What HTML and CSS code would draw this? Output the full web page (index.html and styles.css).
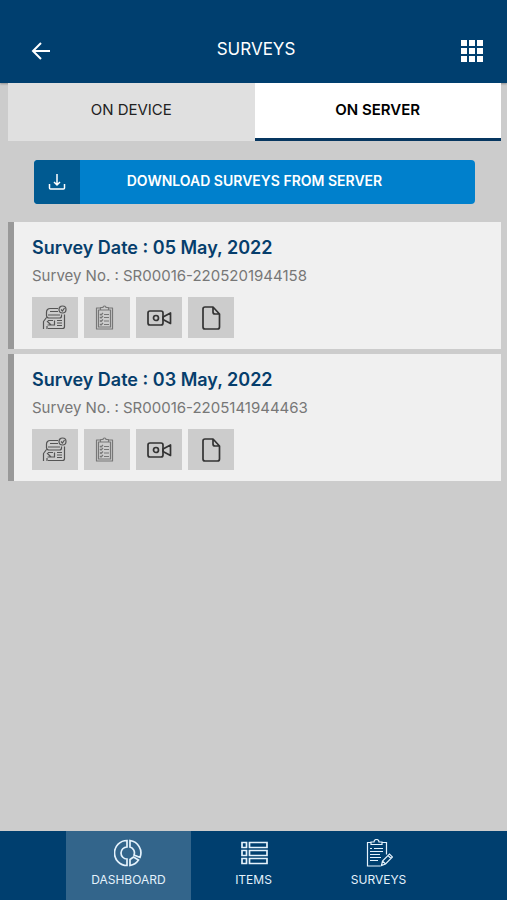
FILE: index.html
```html
<!DOCTYPE html>
<html lang="en">
<head>
    <meta charset="UTF-8">
    <meta name="viewport" content="width=device-width, initial-scale=1.0">
    <title>Surveys</title>
    <link rel="stylesheet" href="styles.css">
</head>
<body>
    <!-- Icons shared by the survey cards -->
    <svg class="sprite" aria-hidden="true">
        <symbol id="icon-form" viewBox="0 0 26 26">
            <path d="M16 3.500H8A3.500 3.500 0 0 0 4.500 7v4M16 6.500H8M4.500 10.500A2.500 2.500 0 0 0 7 13h10.500a2 2 0 0 0 2-2V9.500M6 10h12M22.500 9.500v12a2 2 0 0 1-2 2H6M1.500 24v-7.500l3-4M5 16l4 4H5.500M12.500 15.500V20H9M6 15.500h5M15 15.500h5M15 18h5M15 20.500h5M5 21v3"/>
            <circle cx="20.500" cy="4.500" r="3.500"/>
            <path d="M19 4.500l1.500 1.500 2-3"/>
        </symbol>
        <symbol id="icon-checklist" viewBox="0 0 26 26">
            <path d="M7 3H2.500v21h16V3H14M4.500 5h12v17h-12zM6.500 5V2.500h2.500a1.500 1.500 0 0 1 3 0h2.500V5zM6 9l1 1 2-2M6 12l1 1 2-2M6 15.500l1 1 2-2M6 19l1 1 2-2M10 9.500h5M10 12.500h5M10 16h5M10 19.500h5"/>
        </symbol>
        <symbol id="icon-video" viewBox="0 0 26 26">
            <rect x="2" y="6" width="15" height="14" rx="2"/>
            <circle cx="10" cy="13" r="2.500"/>
            <path d="M17 12l7.500-4v10.500L17 14.500z"/>
        </symbol>
        <symbol id="icon-file" viewBox="0 0 26 26">
            <path d="M7 2h8l6.500 7v13a2 2 0 0 1-2 2H7a2 2 0 0 1-2-2V4a2 2 0 0 1 2-2zM15 2v5a2 2 0 0 0 2 2h4.500"/>
        </symbol>
    </svg>

    <header class="topbar">
        <button class="icon-button" type="button" aria-label="Back">
            <svg class="back-icon" viewBox="0 0 20 20"><path d="M19 10H2M10 2l-8 8 8 8"/></svg>
        </button>
        <h1>SURVEYS</h1>
        <button class="icon-button" type="button" aria-label="Menu">
            <svg class="menu-icon" viewBox="0 0 22 22">
                <path d="M0 0h6v6H0zM8 0h6v6H8zM16 0h6v6h-6zM0 8h6v6H0zM8 8h6v6H8zM16 8h6v6h-6zM0 16h6v6H0zM8 16h6v6H8zM16 16h6v6h-6z"/>
            </svg>
        </button>
    </header>

    <main>
        <div class="tabs">
            <button class="tab" type="button">ON DEVICE</button>
            <button class="tab active" type="button">ON SERVER</button>
        </div>

        <button class="download" type="button">
            <span class="download-icon">
                <svg viewBox="0 0 18 18"><path d="M9 1v11M6 9l3 3 3-3M1.500 11v4a1 1 0 0 0 1 1h13a1 1 0 0 0 1-1v-4"/></svg>
            </span>
            <span class="download-text">DOWNLOAD SURVEYS FROM SERVER</span>
        </button>

        <section class="surveys">
            <article class="card">
                <h2>Survey Date : 05 May, 2022</h2>
                <p>Survey No. : SR00016-2205201944158</p>
                <div class="actions">
                    <button class="action" type="button" aria-label="Form"><svg class="thin"><use href="#icon-form"/></svg></button>
                    <button class="action" type="button" aria-label="Checklist"><svg class="thin light"><use href="#icon-checklist"/></svg></button>
                    <button class="action" type="button" aria-label="Video"><svg><use href="#icon-video"/></svg></button>
                    <button class="action" type="button" aria-label="File"><svg><use href="#icon-file"/></svg></button>
                </div>
            </article>

            <article class="card">
                <h2>Survey Date : 03 May, 2022</h2>
                <p>Survey No. : SR00016-2205141944463</p>
                <div class="actions">
                    <button class="action" type="button" aria-label="Form"><svg class="thin"><use href="#icon-form"/></svg></button>
                    <button class="action" type="button" aria-label="Checklist"><svg class="thin light"><use href="#icon-checklist"/></svg></button>
                    <button class="action" type="button" aria-label="Video"><svg><use href="#icon-video"/></svg></button>
                    <button class="action" type="button" aria-label="File"><svg><use href="#icon-file"/></svg></button>
                </div>
            </article>
        </section>
    </main>

    <nav class="bottom-nav">
        <a class="nav-item active" href="#">
            <svg class="medium" viewBox="0 0 28 28">
                <path d="M13 1.500a12.500 12.500 0 0 0 0 25v-6.500a6 6 0 0 1 0-12zM16 1.500V8a6 6 0 0 1 4 8l6 2.500A12.500 12.500 0 0 0 16 1.500zM16 20.500l3.500-2.500 5 3a13 13 0 0 1-8.500 5.500z"/>
            </svg>
            DASHBOARD
        </a>
        <a class="nav-item" href="#">
            <svg class="medium" viewBox="0 0 28 28">
                <path d="M2 3.500h4.500v5H2zM9.500 3.500h17.500v5H9.500zM2 11.500h4.500v5H2zM9.500 11.500h17.500v5H9.500zM2 19.500h4.500v5H2zM9.500 19.500h17.500v5H9.500z"/>
            </svg>
            ITEMS
        </a>
        <a class="nav-item" href="#">
            <svg viewBox="0 0 28 28">
                <path d="M6 3.500H2.500v23.500h13M17 3.500h4.500v12M6 5.500V3h3a2.500 2.500 0 0 1 5 0h3v2.500zM5 9.500h2M9 9.500h9M5 12.500h13M5 15.500h10M5 18.500h11M5 21.500h8M16.500 26.500l1-4.500 7-7 3 3-7 7zM23 16.500l3 3M17.500 22l3 3"/>
            </svg>
            SURVEYS
        </a>
    </nav>
</body>
</html>
```
FILE: styles.css
```css
* {
    margin: 0;
    padding: 0;
    box-sizing: border-box;
}

body {
    font-family: Inter, "Open Sans", sans-serif;
    background-color: #CCCCCC;
    display: flex;
    flex-direction: column;
    min-height: 100vh;
}

button {
    font-family: inherit;
    border: none;
    cursor: pointer;
}

svg {
    fill: none;
    stroke: currentColor;
    display: block;
}

.sprite {
    display: none;
}

/* Top bar */
.topbar {
    display: flex;
    justify-content: space-between;
    align-items: center;
    height: 83px;
    padding: 18px 24px 0 31px;
    background-color: #003F6F;
    color: #FFFFFF;
    box-shadow: 0 1px 2px rgba(0, 0, 0, 0.3);
}

.topbar h1 {
    font-size: 17px;
    font-weight: 400;
    line-height: 24px;
    padding-bottom: 4px;
}

.icon-button {
    background: none;
    color: #FFFFFF;
}

.back-icon {
    width: 20px;
    height: 20px;
    stroke-width: 2;
}

.menu-icon {
    width: 22px;
    height: 22px;
    fill: currentColor;
    stroke: none;
}

main {
    flex: 1;
    padding: 0 6px 0 8px;
}

/* Tabs */
.tabs {
    display: flex;
}

.tab {
    flex: 1;
    height: 58px;
    padding-bottom: 3px;
    background-color: #E0E0E0;
    color: #222222;
    font-size: 15px;
    border-bottom: 3px solid #E0E0E0;
}

.tab.active {
    background-color: #FFFFFF;
    color: #000000;
    font-weight: 600;
    border-bottom-color: #063660;
}

/* Download button */
.download {
    display: flex;
    width: calc(100% - 52px);
    height: 44px;
    margin: 19px 26px 18px;
    border-radius: 4px;
    overflow: hidden;
    background-color: #0080CC;
    color: #FFFFFF;
}

.download-icon {
    display: flex;
    align-items: center;
    justify-content: center;
    width: 46px;
    height: 44px;
    background-color: #005A91;
}

.download-icon svg {
    width: 18px;
    height: 18px;
    stroke-width: 1.5;
}

.download-text {
    flex: 1;
    padding-right: 46px;
    font-size: 14px;
    font-weight: 600;
    line-height: 42px;
}

/* Survey cards */
.surveys {
    display: grid;
    gap: 5px;
}

.card {
    padding: 13px 18px 11px;
    background-color: #F0F0F0;
    border-left: 6px solid #999999;
}

.card h2 {
    color: #063E6C;
    font-size: 18px;
    font-weight: 600;
    line-height: 26px;
}

.card p {
    color: #777777;
    font-size: 15px;
    line-height: 30px;
    padding-bottom: 6px;
}

.actions {
    display: flex;
    gap: 6px;
}

.action {
    display: flex;
    align-items: center;
    justify-content: center;
    width: 46px;
    height: 41px;
    background-color: #CCCCCC;
    color: #333333;
}

.action svg {
    width: 26px;
    height: 26px;
    stroke-width: 1.7;
    stroke-linejoin: round;
}

.action .thin {
    stroke-width: 1.2;
    color: #555555;
}

.action .light {
    color: #777777;
}

/* Bottom navigation */
.bottom-nav {
    display: flex;
    height: 69px;
    padding: 0 13%;
    background-color: #003F6F;
}

.nav-item {
    flex: 1;
    display: flex;
    flex-direction: column;
    align-items: center;
    gap: 4px;
    padding-top: 8px;
    color: #E4F2FC;
    font-size: 12px;
    line-height: 18px;
    text-decoration: none;
}

.nav-item.active {
    background-color: #33658B;
}

.nav-item svg {
    width: 28px;
    height: 28px;
    stroke-width: 1.2;
}

.nav-item .medium {
    stroke-width: 1.7;
}
```
